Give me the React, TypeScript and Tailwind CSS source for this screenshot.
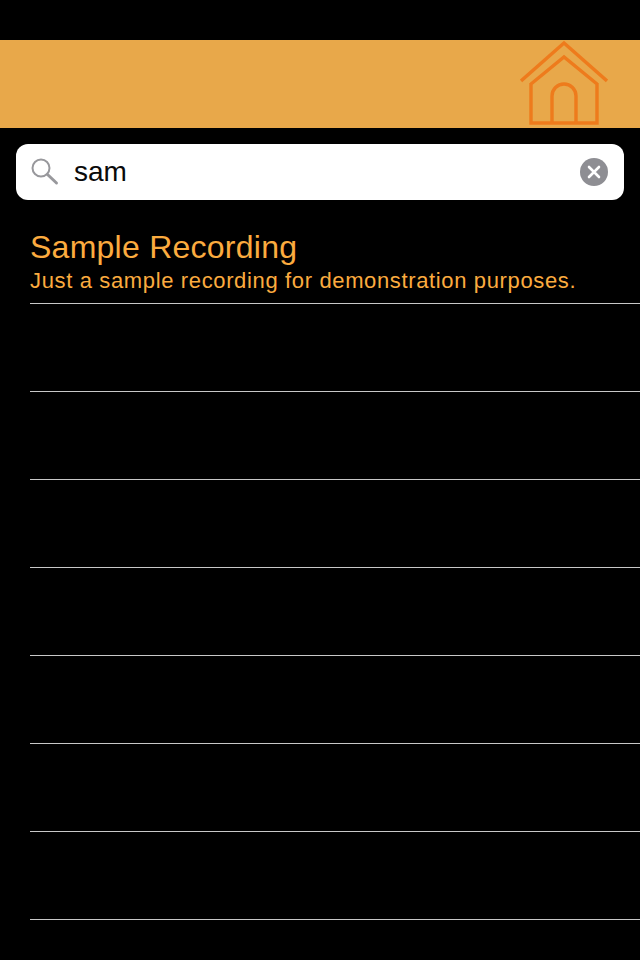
export default function App() {
  const rows = [0, 1, 2, 3, 4, 5, 6];
  return (
    <div className="w-[640px] h-[960px] overflow-hidden bg-black flex flex-col pt-10 font-['Liberation_Sans',Arial,sans-serif]">
      <header className="h-[88px] shrink-0 bg-[#e8a84a] flex justify-end pr-[32px]">
        <svg width="88" height="88" viewBox="0 0 88 88" fill="none" stroke="#ee7b1c" strokeWidth="3.4">
          <path d="M1 41 L44 3 L87 41" />
          <path d="M11 44 L44 17 L77 44 M11 43 V83 H77 V43" />
          <path d="M32 83 V56 A12 12 0 0 1 56 56 V83" />
        </svg>
      </header>
      <div className="p-4 shrink-0">
        <div className="h-14 rounded-[12px] bg-white flex items-center pl-[15px] pr-4">
          <svg width="30" height="30" viewBox="0 0 30 30" fill="none" stroke="#98989c" className="shrink-0">
            <circle cx="10" cy="11" r="8.5" strokeWidth="2" />
            <path d="M16.5 17.5 L25.5 26" strokeWidth="3" strokeLinecap="round" />
          </svg>
          <span className="ml-[13px] flex-1 text-[28px] leading-none text-[#0a0a0a]">sam</span>
          <div className="w-7 h-7 rounded-full bg-[#8e8e93] flex items-center justify-center">
            <svg width="14" height="14" viewBox="0 0 14 14" stroke="#fff" strokeWidth="2.6" strokeLinecap="round">
              <path d="M2 2 L12 12 M12 2 L2 12" />
            </svg>
          </div>
        </div>
      </div>
      <div className="pl-[30px]">
        <div className="h-[88px] border-b border-[#c8c8c8] pt-[13px] text-[#fbab3f]">
          <div className="text-[32px] leading-9 tracking-[0.25px]">Sample Recording</div>
          <div className="text-[22px] leading-[27px] tracking-[0.64px] mt-[2px]">Just a sample recording for demonstration purposes.</div>
        </div>
        {rows.map((r) => (
          <div key={r} className="h-[88px] border-b border-[#c8c8c8]" />
        ))}
      </div>
    </div>
  );
}
